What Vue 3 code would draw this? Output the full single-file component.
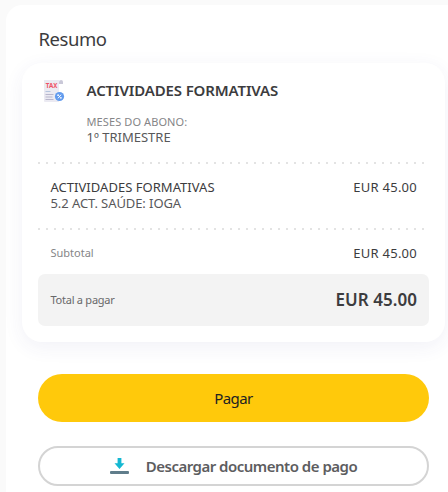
<template>
  <div class="page">
    <div class="summary">
      <h2 class="summary-title">Resumo</h2>

      <div class="card">
        <div class="card-header">
          <svg class="tax-icon" width="22" height="24" viewBox="0 0 22 24">
            <path d="M16 5V3a2 2 0 0 1 4 0v2z" fill="#c9c8d8" />
            <path d="M1 1h17a2 2 0 0 0-2 2v20H2a1 1 0 0 1-1-1z" fill="#ebeaf2" />
            <text x="2.8" y="8.9" textLength="11.5" lengthAdjust="spacingAndGlyphs">TAX</text>
            <path d="M2.5 12.5h5" stroke="#b5c5de" />
            <path d="M2.5 15.5h8M2.5 18h7M2.5 20.5h8" stroke="#b9b6cc" />
            <circle cx="16.5" cy="17.5" r="4.6" fill="#629bee" />
            <path d="m15 19.3 3-3.6" stroke="#fff" />
            <circle cx="15.1" cy="16.2" r=".9" fill="#fff" />
            <circle cx="17.9" cy="18.8" r=".9" fill="#fff" />
          </svg>
          <div class="card-info">
            <div class="card-name">{{ name }}</div>
            <div class="months-label">MESES DO ABONO:</div>
            <div class="months-value">1º TRIMESTRE</div>
          </div>
        </div>

        <div class="dots"></div>

        <div class="row item">
          <div>
            <div class="item-name">{{ name }}</div>
            <div class="item-detail">5.2 ACT. SAÚDE: IOGA</div>
          </div>
          <span class="price">{{ amount }}</span>
        </div>

        <div class="dots"></div>

        <div class="row subtotal">
          <span class="label subtotal-label">Subtotal</span>
          <span class="price">{{ amount }}</span>
        </div>

        <div class="row total">
          <span class="label total-label">Total a pagar</span>
          <span class="total-price">{{ amount }}</span>
        </div>
      </div>

      <div class="actions">
        <button class="btn btn-pay" type="button">Pagar</button>
        <button class="btn btn-download" type="button">
          <svg width="20" height="18" viewBox="0 0 20 18">
            <path d="M7.6 1h3.8v5.2h3.1L9.5 12 4.5 6.2h3.1z" fill="#14b8d2" />
            <rect x="0" y="14" width="19" height="3" rx="1" fill="#607d8b" />
          </svg>
          <span>Descargar documento de pago</span>
        </button>
      </div>
    </div>
  </div>
</template>

<script setup>
import { ref } from 'vue';

const name = ref('ACTIVIDADES FORMATIVAS');
const amount = ref('EUR 45.00');
</script>

<style>
body {
  overflow: hidden;
}
</style>

<style scoped>
.page {
  box-sizing: border-box;
  height: 492px;
  padding: 5px 0 0 6px;
  overflow: hidden;
  background: #fafafa;
  color: #3c3c3e;
  font-family: 'Noto Sans', 'Open Sans', sans-serif;
}

.summary {
  box-sizing: border-box;
  height: 510px;
  padding: 19px 3px 0 16px;
  border-radius: 16px 0 0 0;
  background: #fff;
}

.summary-title {
  height: 39px;
  margin: 0;
  padding-left: 16.5px;
  font-size: 18.5px;
  font-weight: 400;
  line-height: 30px;
  letter-spacing: -0.45px;
}

.card {
  box-sizing: border-box;
  height: 279px;
  padding: 16px;
  border-radius: 20px;
  background: #fff;
  box-shadow: 0 5px 20px rgba(60, 60, 140, 0.07);
}

.card-header {
  display: flex;
  height: 83px;
}

.tax-icon {
  flex: none;
  margin-left: 5px;
}
.tax-icon text {
  fill: #ef5366;
  font-size: 6.8px;
  font-weight: 700;
}

.card-info {
  margin-left: 21.5px;
  white-space: nowrap;
}

.card-name {
  height: 35px;
  font-size: 15px;
  font-weight: 600;
  line-height: 23px;
  letter-spacing: -0.13px;
}

.months-label {
  color: #858587;
  font-size: 11px;
  line-height: 16px;
  letter-spacing: 0.1px;
}

.months-value {
  color: #58585a;
  font-size: 13px;
  line-height: 14px;
}

.dots {
  height: 2px;
  background: repeating-linear-gradient(to right, #e3e3e3 0 2px, transparent 2px 8px);
}

.row {
  display: flex;
  justify-content: space-between;
  padding: 0 12px 0 12.5px;
  white-space: nowrap;
}

.item {
  height: 49px;
  padding-top: 15px;
  font-size: 13px;
  line-height: 16px;
}
.item-name {
  letter-spacing: 0.03px;
}
.item-detail {
  color: #58585a;
  letter-spacing: -0.08px;
}

.price {
  font-size: 13px;
  line-height: 16px;
  letter-spacing: 0.25px;
}

.subtotal {
  align-items: center;
  height: 44px;
  padding-top: 2px;
  box-sizing: border-box;
}

.label {
  font-size: 11px;
  line-height: 16px;
}
.subtotal-label {
  padding-bottom: 1px;
  color: #858587;
}
.total-label {
  color: #68686a;
  letter-spacing: -0.25px;
}

.total {
  align-items: center;
  box-sizing: border-box;
  height: 52px;
  padding-bottom: 1px;
  border-radius: 7px;
  background: #f3f3f3;
}

.total-price {
  font-size: 17px;
  font-weight: 600;
  letter-spacing: 0.05px;
}

.actions {
  display: flex;
  flex-direction: column;
  gap: 24px;
  padding: 32px 16px 0;
}

.btn {
  display: flex;
  align-items: center;
  justify-content: center;
  box-sizing: border-box;
  padding: 0;
  border: none;
  font-family: inherit;
  font-size: 15px;
  cursor: pointer;
}

.btn-pay {
  height: 48px;
  padding-bottom: 1px;
  border-radius: 24px;
  background: #ffc90b;
  color: #222;
  letter-spacing: -0.6px;
}

.btn-download {
  height: 40px;
  padding-bottom: 1px;
  gap: 16px;
  border: 2px solid #d4d4d4;
  border-radius: 20px;
  background: #fff;
  color: #5d5d5f;
  font-weight: 600;
  letter-spacing: -0.5px;
}
</style>
